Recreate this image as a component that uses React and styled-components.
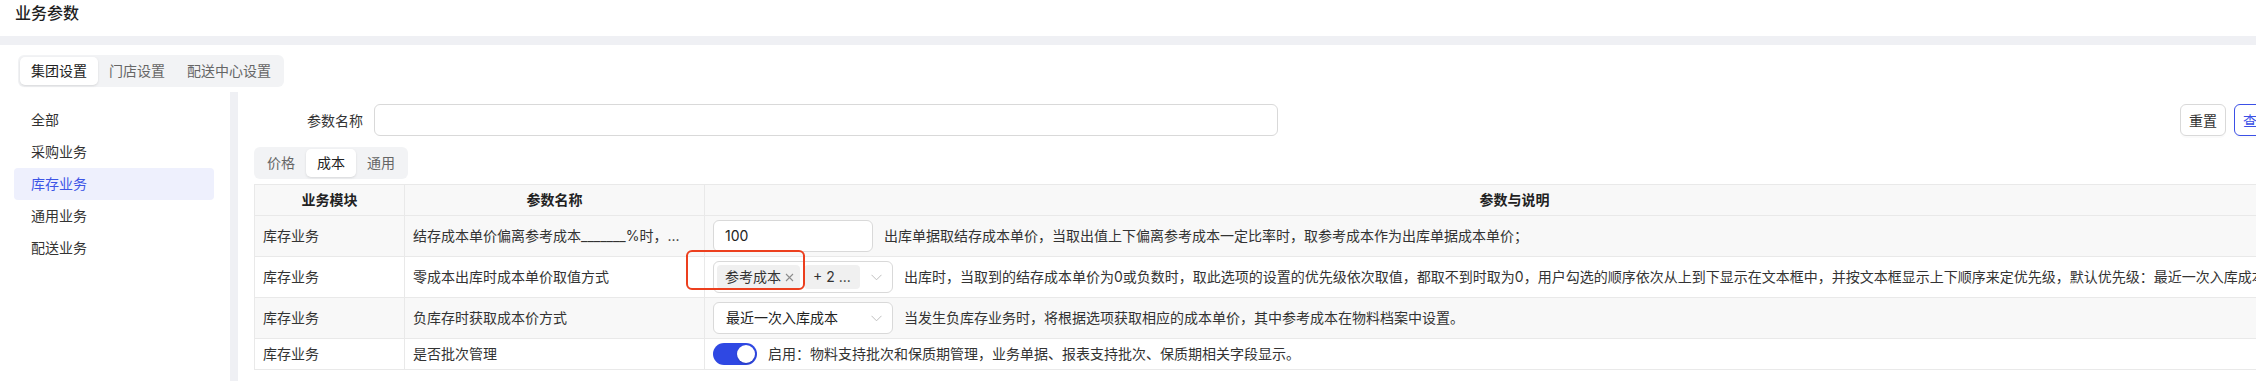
import React from "react";
import styled, { createGlobalStyle } from "styled-components";

const GlobalStyle = createGlobalStyle`
  html, body { margin: 0; padding: 0; background: #fff; overflow: hidden; }
  body {
    font-family: "Inter", "Noto Sans CJK SC", sans-serif;
    color: #333;
    font-size: 14px;
  }
  * { box-sizing: border-box; }
`;

const Page = styled.div`
  width: 2256px;
  height: 381px;
  display: flex;
  flex-direction: column;
  overflow: hidden;
`;

const TitleBar = styled.div`
  height: 36px;
  padding: 1px 15px 0;
`;

const Title = styled.h1`
  margin: 0;
  font-size: 16px;
  line-height: 24px;
  font-weight: 500;
  color: #1f1f1f;
`;

const Band = styled.div`
  height: 9px;
  background: #eff0f4;
`;

const TopTabs = styled.div`
  padding: 10px 0 5px 18px;
`;

const Segmented = styled.div`
  display: inline-flex;
  padding: 2px;
  background: #f2f3f5;
  border-radius: 6px;
`;

const SegItem = styled.div`
  height: 28px;
  line-height: 28px;
  padding: 0 11px;
  border-radius: 5px;
  font-size: 14px;
  color: ${(p) => (p.$active ? "#222" : "#666")};
  background: ${(p) => (p.$active ? "#fff" : "transparent")};
  box-shadow: ${(p) =>
    p.$active ? "0 1px 3px rgba(0,0,0,0.08), 0 1px 2px rgba(0,0,0,0.04)" : "none"};
  white-space: nowrap;
`;

const Body = styled.div`
  flex: 1;
  display: flex;
  min-height: 0;
`;

const Sidebar = styled.div`
  width: 230px;
  flex: none;
  padding-top: 12px;
`;

const NavItem = styled.div`
  height: 32px;
  line-height: 32px;
  margin: 0 16px 0 14px;
  padding-left: 17px;
  border-radius: 4px;
  font-size: 14px;
  color: ${(p) => (p.$active ? "#3d55e6" : "#333")};
  background: ${(p) => (p.$active ? "#eef0fd" : "transparent")};
`;

const Divider = styled.div`
  width: 8px;
  flex: none;
  background: #eff0f4;
`;

const Content = styled.div`
  flex: 1;
  min-width: 0;
  padding: 12px 0 0 16px;
`;

const SearchRow = styled.div`
  width: 2026px;
  height: 32px;
  display: flex;
  align-items: center;
`;

const Label = styled.label`
  width: 109px;
  text-align: right;
  font-size: 14px;
  color: #333;
  margin-right: 11px;
`;

const TextInput = styled.div`
  width: ${(p) => p.$w}px;
  height: 32px;
  border: 1px solid #d9d9d9;
  border-radius: 6px;
  background: #fff;
  padding: 0 11px;
  line-height: 30px;
  font-size: 14px;
  color: #222;
  flex: none;
`;

const Buttons = styled.div`
  margin-left: auto;
  display: flex;
  gap: 8px;
`;

const Button = styled.button`
  width: 46px;
  height: 32px;
  padding: 0;
  border-radius: 6px;
  font-family: inherit;
  font-size: 14px;
  background: #fff;
  border: 1px solid ${(p) => (p.$primary ? "#3b50e6" : "#d9d9d9")};
  color: ${(p) => (p.$primary ? "#3b50e6" : "#333")};
  box-shadow: 0 2px 0 rgba(0, 0, 0, 0.02);
`;

const SubTabs = styled(Segmented)`
  margin-top: 11px;
  display: flex;
  width: fit-content;
`;

const Table = styled.table`
  margin-top: 5px;
  width: 2070px;
  border-collapse: collapse;
  table-layout: fixed;
  font-size: 14px;
`;

const Th = styled.th`
  height: 31px;
  padding: 4px 8px;
  line-height: 22px;
  font-weight: 600;
  color: #222;
  background: #f8f8f8;
  border: 1px solid #e9e9e9;
  text-align: center;
`;

const Tr = styled.tr`
  background: ${(p) => (p.$striped ? "#f8f8f8" : "#fff")};
`;

const Td = styled.td`
  position: relative;
  padding: 4px 8px;
  line-height: 22px;
  border: 1px solid #e9e9e9;
  color: #333;
  white-space: nowrap;
  overflow: ${(p) => (p.$visible ? "visible" : "hidden")};
  text-overflow: ellipsis;
  vertical-align: middle;
`;

const ParamCell = styled.div`
  display: flex;
  align-items: center;
  gap: 11px;
  white-space: nowrap;
`;

const Select = styled.div`
  width: 180px;
  height: 32px;
  flex: none;
  border: 1px solid #d9d9d9;
  border-radius: 6px;
  background: #fff;
  display: flex;
  align-items: center;
  padding: ${(p) => (p.$multi ? "0 10px 0 3px" : "0 10px 0 12px")};
  gap: 4px;
  font-size: 14px;
  color: #222;
`;

const SelectValue = styled.span`
  flex: 1;
  overflow: hidden;
`;

const Tag = styled.span`
  height: 24px;
  display: inline-flex;
  align-items: center;
  gap: 4px;
  padding: ${(p) => (p.$more ? "0 9px" : "0 6px 0 8px")};
  background: #f0f0f0;
  border-radius: 4px;
  font-size: 14px;
  color: #333;
  flex: none;
`;

const Spacer = styled.span`
  flex: 1;
`;

const Switch = styled.span`
  width: 44px;
  height: 22px;
  flex: none;
  border-radius: 11px;
  background: #2f48e3;
  display: flex;
  justify-content: flex-end;
  align-items: center;
  padding: 2px;
`;

const Knob = styled.span`
  width: 18px;
  height: 18px;
  border-radius: 50%;
  background: #fff;
  box-shadow: 0 1px 2px rgba(0, 0, 0, 0.2);
`;

const Highlight = styled.div`
  position: absolute;
  left: -19px;
  top: -7px;
  width: 119px;
  height: 40px;
  border: 2px solid #ec3f1e;
  border-radius: 6px;
  pointer-events: none;
`;

const Chevron = () => (
  <svg width="11" height="7" viewBox="0 0 11 7" fill="none">
    <polyline points="0.5,0.8 5.5,5.8 10.5,0.8" stroke="#bfbfbf" strokeWidth="1" />
  </svg>
);

const Close = () => (
  <svg width="9" height="9" viewBox="0 0 9 9" fill="none">
    <path d="M1 1 L8 8 M8 1 L1 8" stroke="#8c8c8c" strokeWidth="1.1" />
  </svg>
);

const navItems = ["全部", "采购业务", "库存业务", "通用业务", "配送业务"];

export default function App() {
  return (
    <Page>
      <GlobalStyle />
      <TitleBar>
        <Title>业务参数</Title>
      </TitleBar>
      <Band />
      <TopTabs>
        <Segmented>
          <SegItem $active>集团设置</SegItem>
          <SegItem>门店设置</SegItem>
          <SegItem>配送中心设置</SegItem>
        </Segmented>
      </TopTabs>
      <Body>
        <Sidebar>
          {navItems.map((n) => (
            <NavItem key={n} $active={n === "库存业务"}>
              {n}
            </NavItem>
          ))}
        </Sidebar>
        <Divider />
        <Content>
          <SearchRow>
            <Label>参数名称</Label>
            <TextInput $w={904} />
            <Buttons>
              <Button>重置</Button>
              <Button $primary>查询</Button>
            </Buttons>
          </SearchRow>
          <SubTabs>
            <SegItem>价格</SegItem>
            <SegItem $active>成本</SegItem>
            <SegItem>通用</SegItem>
          </SubTabs>
          <Table>
            <colgroup>
              <col style={{ width: 150 }} />
              <col style={{ width: 300 }} />
              <col style={{ width: 1620 }} />
            </colgroup>
            <thead>
              <tr>
                <Th>业务模块</Th>
                <Th>参数名称</Th>
                <Th>参数与说明</Th>
              </tr>
            </thead>
            <tbody>
              <Tr $striped>
                <Td>库存业务</Td>
                <Td>结存成本单价偏离参考成本_______%时，...</Td>
                <Td>
                  <ParamCell>
                    <TextInput $w={160}>100</TextInput>
                    出库单据取结存成本单价，当取出值上下偏离参考成本一定比率时，取参考成本作为出库单据成本单价；
                  </ParamCell>
                </Td>
              </Tr>
              <Tr>
                <Td>库存业务</Td>
                <Td>零成本出库时成本单价取值方式</Td>
                <Td $visible>
                  <ParamCell>
                    <Select $multi>
                      <Tag>
                        参考成本
                        <Close />
                      </Tag>
                      <Tag $more>+ 2 ...</Tag>
                      <Spacer />
                      <Chevron />
                    </Select>
                    出库时，当取到的结存成本单价为0或负数时，取此选项的设置的优先级依次取值，都取不到时取为0，用户勾选的顺序依次从上到下显示在文本框中，并按文本框显示上下顺序来定优先级，默认优先级：最近一次入库成本、参考成本、移动加权平均成本。
                  </ParamCell>
                  <Highlight />
                </Td>
              </Tr>
              <Tr $striped>
                <Td>库存业务</Td>
                <Td>负库存时获取成本价方式</Td>
                <Td>
                  <ParamCell>
                    <Select>
                      <SelectValue>最近一次入库成本</SelectValue>
                      <Chevron />
                    </Select>
                    当发生负库存业务时，将根据选项获取相应的成本单价，其中参考成本在物料档案中设置。
                  </ParamCell>
                </Td>
              </Tr>
              <Tr>
                <Td>库存业务</Td>
                <Td>是否批次管理</Td>
                <Td>
                  <ParamCell>
                    <Switch>
                      <Knob />
                    </Switch>
                    启用：物料支持批次和保质期管理，业务单据、报表支持批次、保质期相关字段显示。
                  </ParamCell>
                </Td>
              </Tr>
            </tbody>
          </Table>
        </Content>
      </Body>
    </Page>
  );
}
